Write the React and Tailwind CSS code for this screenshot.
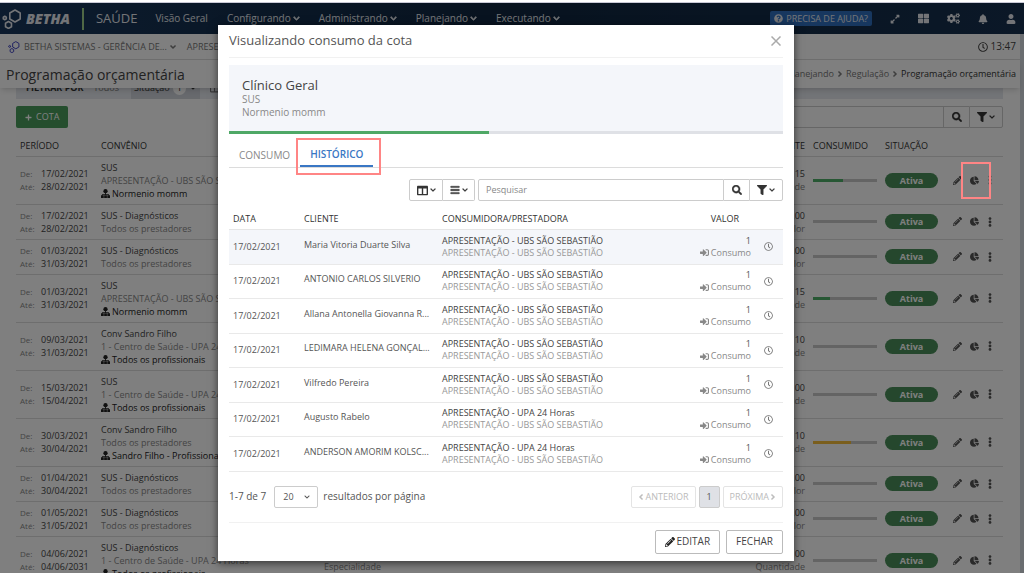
import { useState } from "react";
import {
  FaAngleDown,
  FaBars,
  FaBell,
  FaChartPie,
  FaChevronDown,
  FaChevronLeft,
  FaChevronRight,
  FaCogs,
  FaColumns,
  FaEllipsisV,
  FaExpandAlt,
  FaFilter,
  FaPencilAlt,
  FaPlus,
  FaQuestionCircle,
  FaRegClock,
  FaSearch,
  FaSignInAlt,
  FaThLarge,
  FaUser,
} from "react-icons/fa";

const MENUS = ["Configurando", "Administrando", "Planejando", "Executando"];

const UBS = "APRESENTAÇÃO - UBS SÃO SEBASTIÃO";
const UPA = "1 - Centro de Saúde - UPA 24 Horas";

const COTAS = [
  { id: 1, de: "17/02/2021", ate: "28/02/2021", convenio: "SUS", prestador: UBS, profissional: "Normenio momm", limite: "15", tipo: "Quantidade", consumido: 47, cor: "bg-[#4fae68]", destaque: true },
  { id: 2, de: "17/02/2021", ate: "28/02/2021", convenio: "SUS - Diagnósticos", prestador: "Todos os prestadores", limite: "100,00", tipo: "Valor", consumido: 0 },
  { id: 3, de: "01/03/2021", ate: "31/03/2021", convenio: "SUS - Diagnósticos", prestador: "Todos os prestadores", limite: "100,00", tipo: "Valor", consumido: 0 },
  { id: 4, de: "01/03/2021", ate: "31/03/2021", convenio: "SUS", prestador: UBS, profissional: "Normenio momm", limite: "15", tipo: "Quantidade", consumido: 27, cor: "bg-[#4fae68]" },
  { id: 5, de: "09/03/2021", ate: "31/03/2021", convenio: "Conv Sandro Filho", prestador: UPA, profissional: "Todos os profissionais", limite: "10", tipo: "Quantidade", consumido: 0 },
  { id: 6, de: "15/03/2021", ate: "15/04/2021", convenio: "SUS", prestador: UPA, profissional: "Todos os profissionais", limite: "100", tipo: "Quantidade", consumido: 0 },
  { id: 7, de: "30/03/2021", ate: "30/04/2021", convenio: "Conv Sandro Filho", prestador: "Todos os prestadores", profissional: "Sandro Filho - Profissional", limite: "10", tipo: "Quantidade", consumido: 60, cor: "bg-[#f5bd3a]" },
  { id: 8, de: "01/04/2021", ate: "30/04/2021", convenio: "SUS - Diagnósticos", prestador: "Todos os prestadores", limite: "100,00", tipo: "Valor", consumido: 0 },
  { id: 9, de: "01/05/2021", ate: "31/05/2021", convenio: "SUS - Diagnósticos", prestador: "Todos os prestadores", limite: "100,00", tipo: "Valor", consumido: 0 },
  { id: 10, de: "04/06/2021", ate: "04/06/2031", convenio: "SUS - Diagnósticos", prestador: UPA, profissional: "Todos os profissionais", restricao: "Especialidade", limite: "100", tipo: "Quantidade", consumido: 0 },
];

const HISTORICO = [
  { id: 1, cliente: "Maria Vitoria Duarte Silva", consumidora: UBS },
  { id: 2, cliente: "ANTONIO CARLOS SILVERIO", consumidora: UBS },
  { id: 3, cliente: "Allana Antonella Giovanna R...", consumidora: UBS },
  { id: 4, cliente: "LEDIMARA HELENA GONÇAL...", consumidora: UBS },
  { id: 5, cliente: "Vilfredo Pereira", consumidora: UBS },
  { id: 6, cliente: "Augusto Rabelo", consumidora: "APRESENTAÇÃO - UPA 24 Horas" },
  { id: 7, cliente: "ANDERSON AMORIM KOLSC...", consumidora: "APRESENTAÇÃO - UPA 24 Horas" },
];

const Hexagons = ({ className }) => (
  <svg viewBox="0 0 20 20" className={className} fill="none" stroke="currentColor" strokeWidth="1.6" strokeLinejoin="round" aria-hidden="true">
    <path d="M13 1l5.200 3v6L13 13l-5.200-3V4z" />
    <path d="M6.500 12.500l3 1.700v3.500l-3 1.700-3-1.700v-3.500z" />
    <path d="M2.800 7.300l1.500.9v1.700l-1.500.9-1.500-.9V8.200z" />
  </svg>
);

const Profissional = () => (
  <svg viewBox="0 0 16 16" className="w-[9px] h-[9px] shrink-0" fill="currentColor" aria-hidden="true">
    <circle cx="8" cy="3.800" r="3.800" />
    <path d="M7.200 7h1.600v2.200h5.400v2.300h-1.600v-.8H3.400v.8H1.800V9.200h5.400z" />
    <path d="M0 11.200h4.900V16H0zM5.600 11.200h4.900V16H5.600zM11.200 11.200H16V16h-4.800z" />
  </svg>
);

const Navbar = () => (
  <header className="flex items-center h-8 pl-0.5 pr-2 bg-linear-to-r from-[#18375c] via-[#10263f] to-[#16304f] text-[#e6e9ee] border-t border-[#c9c9d6]">
    <Hexagons className="w-5 h-5" />
    <span className="ml-1 text-[14px] font-extrabold italic">BETHA</span>
    <span className="w-0.5 h-[22px] ml-3 bg-[#9fd08a]" />
    <span className="ml-3 text-[13px]">SAÚDE</span>
    <nav className="flex items-center gap-[19px] ml-[18px] text-[10px]">
      <a href="#visao-geral">Visão Geral</a>
      {MENUS.map((menu) => (
        <button key={menu} type="button" className="flex items-center gap-0.5">
          {menu}
          <FaChevronDown className="w-[7px] h-[7px] stroke-50" />
        </button>
      ))}
    </nav>
    <div className="flex items-center ml-auto">
      <button type="button" className="flex items-center gap-[3px] h-[15px] px-1 rounded-xs bg-[#2f6fbf] text-[9px] whitespace-nowrap">
        <FaQuestionCircle className="w-[9px] h-[9px]" />
        PRECISA DE AJUDA?
      </button>
      <div className="flex items-center gap-[18px] ml-[18px]">
        <button type="button" aria-label="Expandir"><FaExpandAlt className="w-[10px] h-[10px]" /></button>
        <button type="button" aria-label="Sistemas"><FaThLarge className="w-[11px] h-[11px]" /></button>
        <button type="button" aria-label="Ferramentas"><FaCogs className="w-[13px] h-[13px]" /></button>
        <button type="button" aria-label="Notificações"><FaBell className="w-[10px] h-[10px]" /></button>
        <button type="button" aria-label="Usuário"><FaUser className="w-[10px] h-[10px]" /></button>
      </div>
    </div>
  </header>
);

const ContextBar = () => (
  <div className="flex items-center h-[26px] pl-2 pr-1 bg-white text-[9px] text-[#777] border-b border-[#dcdcdc]">
    <Hexagons className="w-3 h-3 text-[#3b3fc0]" />
    <button type="button" className="flex items-center gap-[3px] ml-1">
      BETHA SISTEMAS - GERÊNCIA DE...
      <FaChevronDown className="w-[6px] h-[6px] stroke-50" />
    </button>
    <button type="button" className="ml-[11px]">APRESENTAÇÃO</button>
    <span className="flex items-center gap-[3px] ml-auto text-[10px] text-[#444]">
      <FaRegClock className="w-[10px] h-[10px]" />
      13:47
    </span>
  </div>
);

const TitleBar = () => (
  <div className="relative z-10 flex items-center justify-between h-7 pl-1.5 pr-1 bg-white shadow-md">
    <h1 className="text-[14px] text-[#444]">Programação orçamentária</h1>
    <nav className="flex items-center gap-[3px] text-[9px] text-[#777]">
      <a href="#planejando">Planejando</a>
      <FaChevronRight className="w-[6px] h-[6px] stroke-50" />
      <a href="#regulacao">Regulação</a>
      <FaChevronRight className="w-[6px] h-[6px] stroke-50" />
      <span className="text-[#333]">Programação orçamentária</span>
    </nav>
  </div>
);

const CotasTable = () => (
  <table className="w-full table-fixed text-[9px] leading-[13px] text-[#444]">
    <thead>
      <tr className="h-7 border-b border-[#dcdcdc] text-left text-[#333]">
        <th className="w-[81px] pl-1 pt-2 font-medium">PERÍODO</th>
        <th className="pl-1 pt-2 font-medium">CONVÊNIO</th>
        <th className="w-[409px]" />
        <th className="w-20 pr-1 pt-2 font-medium text-right">LIMITE</th>
        <th className="w-[72px] pl-1 pt-2 font-medium">CONSUMIDO</th>
        <th className="w-[60px] pl-1 pt-2 font-medium">SITUAÇÃO</th>
        <th className="w-[62px]" />
      </tr>
    </thead>
    <tbody>
      {COTAS.map((cota) => (
        <tr key={cota.id} className={`border-b border-[#dcdcdc] ${cota.profissional ? "h-12" : "h-[35px]"}`}>
          <td className="pl-1">
            <div className="flex"><span className="w-[21px] text-[8px] text-[#888]">De:</span>{cota.de}</div>
            <div className="flex"><span className="w-[21px] text-[8px] text-[#888]">Até:</span>{cota.ate}</div>
          </td>
          <td className="pl-1 whitespace-nowrap">
            <div>{cota.convenio}</div>
            <div className="text-[#888]">{cota.prestador}</div>
            {cota.profissional && (
              <div className="flex items-center gap-0.5 text-[#222]">
                <Profissional />
                {cota.profissional}
              </div>
            )}
          </td>
          <td className="pl-1 text-[#888]">
            {cota.restricao && <div className="pt-[13px]">{cota.restricao}</div>}
          </td>
          <td className="pr-1 text-right">
            <div>{cota.limite}</div>
            <div className="text-[#888]">{cota.tipo}</div>
          </td>
          <td className="px-1">
            <div className="h-[3px] bg-[#c8c8c8]">
              <div className={`h-full ${cota.cor || ""}`} style={{ width: `${cota.consumido}%` }} />
            </div>
          </td>
          <td className="pl-1">
            <span className="flex items-center justify-center w-[53px] h-[15px] rounded-full bg-[#4a8f5a] text-white font-bold">Ativa</span>
          </td>
          <td>
            <div className="flex items-center justify-end gap-2 pr-2.5 text-[#555]">
              <button type="button" aria-label="Editar cota"><FaPencilAlt className="w-[9px] h-[9px]" /></button>
              <button type="button" aria-label="Visualizar consumo" className="relative">
                <FaChartPie className="w-[9px] h-[9px]" />
                {cota.destaque && (
                  <span className="absolute -left-[9px] -right-[12px] -inset-y-[14px] z-30 border-2 border-[#ff8585]" />
                )}
              </button>
              <button type="button" aria-label="Mais opções"><FaEllipsisV className="w-[6px] h-[10px]" /></button>
            </div>
          </td>
        </tr>
      ))}
    </tbody>
  </table>
);

const Modal = () => {
  const [pesquisa, setPesquisa] = useState("");
  const [porPagina, setPorPagina] = useState("20");

  return (
    <div className="absolute inset-x-0 top-[3px] bottom-0 z-20 flex justify-center items-start pt-[22px] pr-3 bg-black/50">
      <section role="dialog" aria-label="Visualizando consumo da cota" className="w-[576px] px-[11px] bg-white text-[#555] shadow-[0_2px_8px_rgba(0,0,0,0.6)]">
        <div className="flex items-center justify-between h-[33px] border-b border-[#f1f1f1]">
          <h2 className="text-[13px]">Visualizando consumo da cota</h2>
          <button type="button" aria-label="Fechar janela" className="mr-0.5 text-[#aaa]">
            <svg viewBox="0 0 10 10" className="w-[10px] h-[10px]" stroke="currentColor" strokeWidth="1.500">
              <path d="M.5.5l9 9M9.500.5l-9 9" />
            </svg>
          </button>
        </div>

        <div className="mt-[7px] px-[13px] pt-3 pb-3 bg-[#f4f6fa]">
          <h3 className="text-[13px] leading-4 text-[#444]">Clínico Geral</h3>
          <p className="text-[10px] leading-[13px] text-[#888]">SUS</p>
          <p className="text-[10px] leading-[13px] text-[#888]">Normenio momm</p>
        </div>
        <div className="h-[3px] bg-[#dfe1e6]">
          <div className="h-full w-[47%] bg-[#4fa866]" />
        </div>

        <div className="flex h-[34px] pt-2.5 border-b border-[#dcdcdc] text-[10px]">
          <button type="button" className="px-2.5 text-[#888]">CONSUMO</button>
          <button type="button" className="relative px-2.5 border-b-2 border-[#3a77c4] font-semibold text-[#3a77c4]">
            HISTÓRICO
            <span className="absolute -left-1 -right-2 -top-1.5 -bottom-2.5 border-2 border-[#ff8585]" />
          </button>
        </div>

        <div className="flex justify-end h-[22px] mt-[11px] text-[#333]">
          <button type="button" aria-label="Colunas" className="flex items-center justify-center gap-0.5 w-[34px] border border-[#ccc] rounded-l-xs">
            <FaColumns className="w-[11px] h-[11px]" />
            <FaChevronDown className="w-[6px] h-[6px] stroke-20" />
          </button>
          <button type="button" aria-label="Ordenação" className="flex items-center justify-center gap-0.5 w-8 border border-l-0 border-[#ccc] rounded-r-xs">
            <FaBars className="w-[10px] h-[10px] stroke-20" />
            <FaChevronDown className="w-[6px] h-[6px] stroke-20" />
          </button>
          <input
            type="text"
            aria-label="Pesquisar"
            placeholder="Pesquisar"
            value={pesquisa}
            onChange={(e) => setPesquisa(e.target.value)}
            className="w-[246px] ml-[3px] px-[7px] border border-[#ccc] rounded-l-xs text-[9px] placeholder:text-[#888]"
          />
          <button type="button" aria-label="Buscar" className="flex items-center justify-center w-[25px] border-y border-[#ccc]">
            <FaSearch className="w-[10px] h-[10px] stroke-20" />
          </button>
          <button type="button" aria-label="Filtrar" className="flex items-center justify-center gap-0.5 w-[34px] border border-[#ccc] rounded-r-xs">
            <FaFilter className="w-[10px] h-[10px] stroke-20" />
            <FaChevronDown className="w-[6px] h-[6px] stroke-20" />
          </button>
        </div>

        <table className="w-full mt-[6px] table-fixed text-[9px] leading-[12px]">
          <thead>
            <tr className="h-[22px] border-b border-[#e6e6e6] text-left text-[#333]">
              <th className="w-[71px] pl-1 pt-0.5 font-medium">DATA</th>
              <th className="w-[138px] pl-1 pt-0.5 font-medium">CLIENTE</th>
              <th className="pl-1 pt-0.5 font-medium">CONSUMIDORA/PRESTADORA</th>
              <th className="w-[70px] pr-3 pt-0.5 font-medium text-right">VALOR</th>
              <th className="w-8" />
            </tr>
          </thead>
          <tbody>
            {HISTORICO.map((item) => (
              <tr key={item.id} className="border-b border-[#e9e9e9] odd:h-[35px] even:h-[34px] first:bg-[#f4f6fa]">
                <td className="pl-1">17/02/2021</td>
                <td className="pl-1 pb-1 font-medium whitespace-nowrap">{item.cliente}</td>
                <td className="pl-1">
                  <div className="text-[#444]">{item.consumidora}</div>
                  <div className="text-[#999]">{UBS}</div>
                </td>
                <td className="text-right">
                  <div>1</div>
                  <div className="flex items-center justify-end gap-0.5 text-[#888]">
                    <FaSignInAlt className="w-[9px] h-[9px]" />
                    Consumo
                  </div>
                </td>
                <td className="pl-[13px] text-[#777]">
                  <button type="button" aria-label="Ver horário" className="flex"><FaRegClock className="w-[9px] h-[9px]" /></button>
                </td>
              </tr>
            ))}
          </tbody>
        </table>

        <div className="flex items-center h-[51px] border-b border-[#f1f1f1] text-[10px]">
          <span>1-7 de 7</span>
          <div className="relative ml-2 mr-[5px]">
            <select
              aria-label="Resultados por página"
              value={porPagina}
              onChange={(e) => setPorPagina(e.target.value)}
              className="w-11 h-[22px] pl-2 border border-[#ccc] rounded-xs appearance-none text-[9px]"
            >
              <option>20</option>
              <option>50</option>
            </select>
            <FaChevronDown className="absolute top-2 right-2 w-[6px] h-[6px] pointer-events-none" />
          </div>
          <span>resultados por página</span>
          <div className="flex gap-[3px] ml-auto text-[9px] text-[#bbb]">
            <button type="button" className="flex items-center gap-px h-[22px] px-1.5 border border-[#e4e4e4] rounded-xs">
              <FaChevronLeft className="w-[6px] h-[6px] stroke-50" />
              ANTERIOR
            </button>
            <button type="button" className="w-[21px] h-[22px] border border-[#ccc] rounded-xs bg-[#dfe1e6] text-[#555]">1</button>
            <button type="button" className="flex items-center gap-px h-[22px] px-1.5 border border-[#e4e4e4] rounded-xs">
              PRÓXIMA
              <FaChevronRight className="w-[6px] h-[6px] stroke-50" />
            </button>
          </div>
        </div>

        <div className="flex justify-end gap-1.5 pt-[7px] pb-[7px] text-[10px] text-[#444]">
          <button type="button" className="flex items-center gap-0.5 h-6 px-[9px] border border-[#bbb] rounded-xs">
            <FaPencilAlt className="w-[10px] h-[10px] text-[#222]" />
            EDITAR
          </button>
          <button type="button" className="h-6 px-[9px] border border-[#bbb] rounded-xs">FECHAR</button>
        </div>
      </section>
    </div>
  );
};

const App = () => {
  return (
    <div className="relative h-screen overflow-hidden pt-0.5 bg-white font-['Open_Sans',sans-serif]">
      <Navbar />
      <div className="border-r-4 border-[#d5dae0]">
        <ContextBar />
        <TitleBar />
        <main className="pl-4 pr-[17px]">
          <div className="flex items-center h-[22px] -mt-[11px] px-2.5 bg-[#e6e9ef] text-[9px] text-[#777]">
            <span className="font-bold text-[#333]">FILTRAR POR</span>
            <button type="button" className="ml-2.5">Todos</button>
            <button type="button" className="flex items-center gap-[3px] h-full ml-3 px-[3px] bg-[#d0d4db] text-[#333]">
              Situação
              <span className="px-1 rounded-full bg-white">1</span>
              <FaAngleDown className="w-2 h-2" />
            </button>
            <FaColumns className="w-[9px] h-[9px] ml-2.5" />
          </div>

          <div className="flex mt-[7px] text-[#333]">
            <button type="button" className="flex items-center gap-1 h-[22px] px-[9px] rounded-xs bg-[#4a9c5d] text-[9px] text-white">
              <FaPlus className="w-[7px] h-[7px]" />
              COTA
            </button>
            <input type="text" aria-label="Pesquisar cotas" className="flex-1 h-[22px] ml-60 border border-[#ccc]" />
            <button type="button" aria-label="Buscar cotas" className="flex items-center justify-center w-[25px] border-y border-[#ccc]">
              <FaSearch className="w-[10px] h-[10px] stroke-20" />
            </button>
            <button type="button" aria-label="Filtrar cotas" className="flex items-center justify-center gap-0.5 w-[34px] border border-[#ccc] rounded-r-xs">
              <FaFilter className="w-[10px] h-[10px] stroke-20" />
              <FaChevronDown className="w-[6px] h-[6px] stroke-20" />
            </button>
          </div>

          <CotasTable />
        </main>
      </div>
      <Modal />
    </div>
  );
};

export default App;
